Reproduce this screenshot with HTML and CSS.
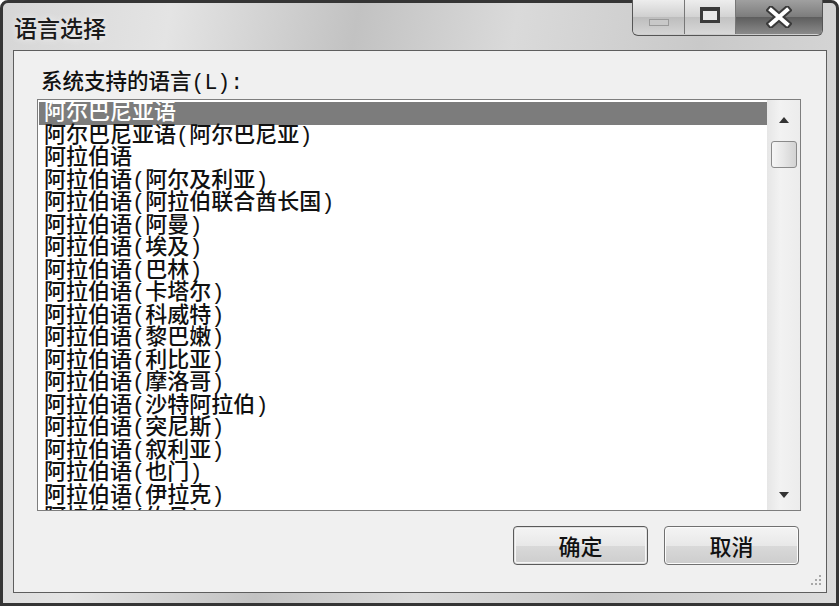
FILE: index.html
```html
<!DOCTYPE html>
<html>
<head>
<title>语言选择</title>
<link rel="stylesheet" href="styles.css">
<meta name="viewport" content="width=device-width, initial-scale=1.0">
</head>
<body>
<div class="window">
  <div class="titlebar">
    <div class="title">语言选择</div>
    <div class="caption-btns">
      <div class="cap cap-min"><span class="min-icon"></span></div>
      <div class="cap cap-max"><span class="max-icon"></span></div>
      <div class="cap cap-close">
        <svg width="26" height="22" viewBox="0 0 26 22">
          <path d="M5 4 L21 18 M21 4 L5 18" stroke="#3a3a3a" stroke-width="8" stroke-linecap="square"/>
          <path d="M5 4 L21 18 M21 4 L5 18" stroke="#ffffff" stroke-width="4" stroke-linecap="square"/>
        </svg>
      </div>
    </div>
  </div>
  <div class="client">
    <div class="label">系统支持的语言(L):</div>
    <div class="listbox">
      <div class="rows">
        <div class="row selected">阿尔巴尼亚语</div>
        <div class="row">阿尔巴尼亚语(阿尔巴尼亚)</div>
        <div class="row">阿拉伯语</div>
        <div class="row">阿拉伯语(阿尔及利亚)</div>
        <div class="row">阿拉伯语(阿拉伯联合酋长国)</div>
        <div class="row">阿拉伯语(阿曼)</div>
        <div class="row">阿拉伯语(埃及)</div>
        <div class="row">阿拉伯语(巴林)</div>
        <div class="row">阿拉伯语(卡塔尔)</div>
        <div class="row">阿拉伯语(科威特)</div>
        <div class="row">阿拉伯语(黎巴嫩)</div>
        <div class="row">阿拉伯语(利比亚)</div>
        <div class="row">阿拉伯语(摩洛哥)</div>
        <div class="row">阿拉伯语(沙特阿拉伯)</div>
        <div class="row">阿拉伯语(突尼斯)</div>
        <div class="row">阿拉伯语(叙利亚)</div>
        <div class="row">阿拉伯语(也门)</div>
        <div class="row">阿拉伯语(伊拉克)</div>
        <div class="row">阿拉伯语(约旦)</div>
      </div>
      <div class="scrollbar">
        <svg class="arrow" width="12" height="8" viewBox="0 0 12 8"><path d="M1 7 L6 1 L11 7 Z" fill="#333"/></svg>
        <div class="thumb"></div>
        <div class="track"></div>
        <svg class="arrow" width="12" height="8" viewBox="0 0 12 8"><path d="M1 1 L6 7 L11 1 Z" fill="#333"/></svg>
      </div>
    </div>
    <div class="buttons">
      <div class="btn default">确定</div>
      <div class="btn">取消</div>
    </div>
    <svg class="grip" width="14" height="14" viewBox="0 0 14 14">
      <g fill="#a8a8a8">
        <rect x="11" y="1" width="2" height="2"/>
        <rect x="11" y="5" width="2" height="2"/><rect x="7" y="5" width="2" height="2"/>
        <rect x="11" y="9" width="2" height="2"/><rect x="7" y="9" width="2" height="2"/><rect x="3" y="9" width="2" height="2"/>
      </g>
    </svg>
  </div>
</div>
</body>
</html>
```

FILE: styles.css
```css
body {
  margin: 0;
  font-family: "Liberation Mono", "Noto Sans CJK SC", monospace;
  color: #111;
}
.window {
  width: 839px;
  height: 606px;
  box-sizing: border-box;
  border: 3px solid #353535;
  border-radius: 8px 8px 0 0;
  background: linear-gradient(100deg, #d6d6d6 0%, #e4e4e4 18%, #c2c2c2 38%, #dadada 55%, #c9c9c9 75%, #dcdcdc 100%);
  display: flex;
  flex-direction: column;
}
.titlebar {
  height: 47px;
  display: flex;
  justify-content: space-between;
  align-items: flex-start;
}
.title {
  font-family: "Noto Sans CJK SC", sans-serif;
  font-size: 23px;
  font-weight: 500;
  line-height: 24px;
  padding: 12px 0 0 11px;
  color: #1a1a1a;
  text-shadow: 0 0 6px #f4f4f4;
}
.caption-btns {
  display: flex;
  margin: -3px 13px 0 0;
  height: 35px;
  border: 1px solid #555;
  border-top: none;
  border-radius: 0 0 6px 6px;
  overflow: hidden;
}
.cap {
  height: 34px;
  display: flex;
  align-items: center;
  justify-content: center;
  box-sizing: border-box;
}
.cap-min {
  width: 52px;
  background: linear-gradient(#ededed, #cfcfcf 50%, #bdbdbd 51%, #d4d4d4);
  border-right: 1px solid #777;
}
.cap-max {
  width: 51px;
  background: linear-gradient(#ededed, #d3d3d3 50%, #c2c2c2 51%, #d8d8d8);
  border-right: 1px solid #777;
}
.cap-close {
  width: 86px;
  background: linear-gradient(#a0a0a0, #7c7c7c 50%, #5e5e5e 51%, #8a8a8a);
}
.min-icon {
  width: 18px;
  height: 5px;
  margin-top: 10px;
  background: #c8c8c8;
  border: 1px solid #9a9a9a;
}
.max-icon {
  width: 14px;
  height: 9px;
  margin-top: -4px;
  border: 3px solid #3a3a3a;
  border-top-width: 4px;
  background: #e8e8e8;
}
.client {
  flex: 1;
  margin: 0 9px 10px 10px;
  border: 1px solid #5e5e5e;
  background: #f0f0f0;
  position: relative;
  display: flex;
  flex-direction: column;
}
.label {
  font-size: 21.5px;
  font-weight: 500;
  line-height: 24px;
  margin: 20px 0 0 27px;
}
.listbox {
  margin: 4px 0 0 23px;
  width: 764px;
  height: 412px;
  box-sizing: border-box;
  border: 1px solid #7e7e7e;
  background: #fff;
  display: flex;
  overflow: hidden;
}
.rows {
  flex: 1;
  padding: 2px 0 0 1px;
  overflow: hidden;
}
.row {
  font-size: 22px;
  font-weight: 500;
  line-height: 24px;
  height: 22.5px;
  padding-left: 5px;
  white-space: nowrap;
}
.row.selected {
  background: #7c7c7c;
  color: #fff;
}
.scrollbar {
  width: 33px;
  background: linear-gradient(90deg, #e6e6e6, #f2f2f2 40%, #ececec);
  display: flex;
  flex-direction: column;
  align-items: center;
  padding: 16px 0 11px;
  box-sizing: border-box;
}
.arrow {
  flex: none;
}
.thumb {
  width: 26px;
  height: 27px;
  margin-top: 17px;
  box-sizing: border-box;
  border: 1px solid #8a8a8a;
  border-radius: 3px;
  background: linear-gradient(90deg, #f6f6f6, #e6e6e6 50%, #d2d2d2);
}
.track {
  flex: 1;
}
.buttons {
  display: flex;
  justify-content: flex-end;
  gap: 16px;
  margin: 15px 27px 0 0;
}
.btn {
  width: 135px;
  height: 39px;
  box-sizing: border-box;
  border: 1px solid #707070;
  border-radius: 4px;
  background: linear-gradient(#f4f4f4, #e8e8e8 50%, #d9d9d9 51%, #cdcdcd);
  font-family: "Noto Sans CJK SC", sans-serif;
  font-size: 22px;
  font-weight: 500;
  line-height: 37px;
  text-align: center;
  box-shadow: inset 0 0 0 1px #fbfbfb;
}
.btn.default {
  border-color: #5a5a5a;
  box-shadow: inset 0 0 0 1px #e0e0e0, inset 0 0 0 2px #f6f6f6;
}
.grip {
  position: absolute;
  right: 4px;
  bottom: 4px;
}
```
